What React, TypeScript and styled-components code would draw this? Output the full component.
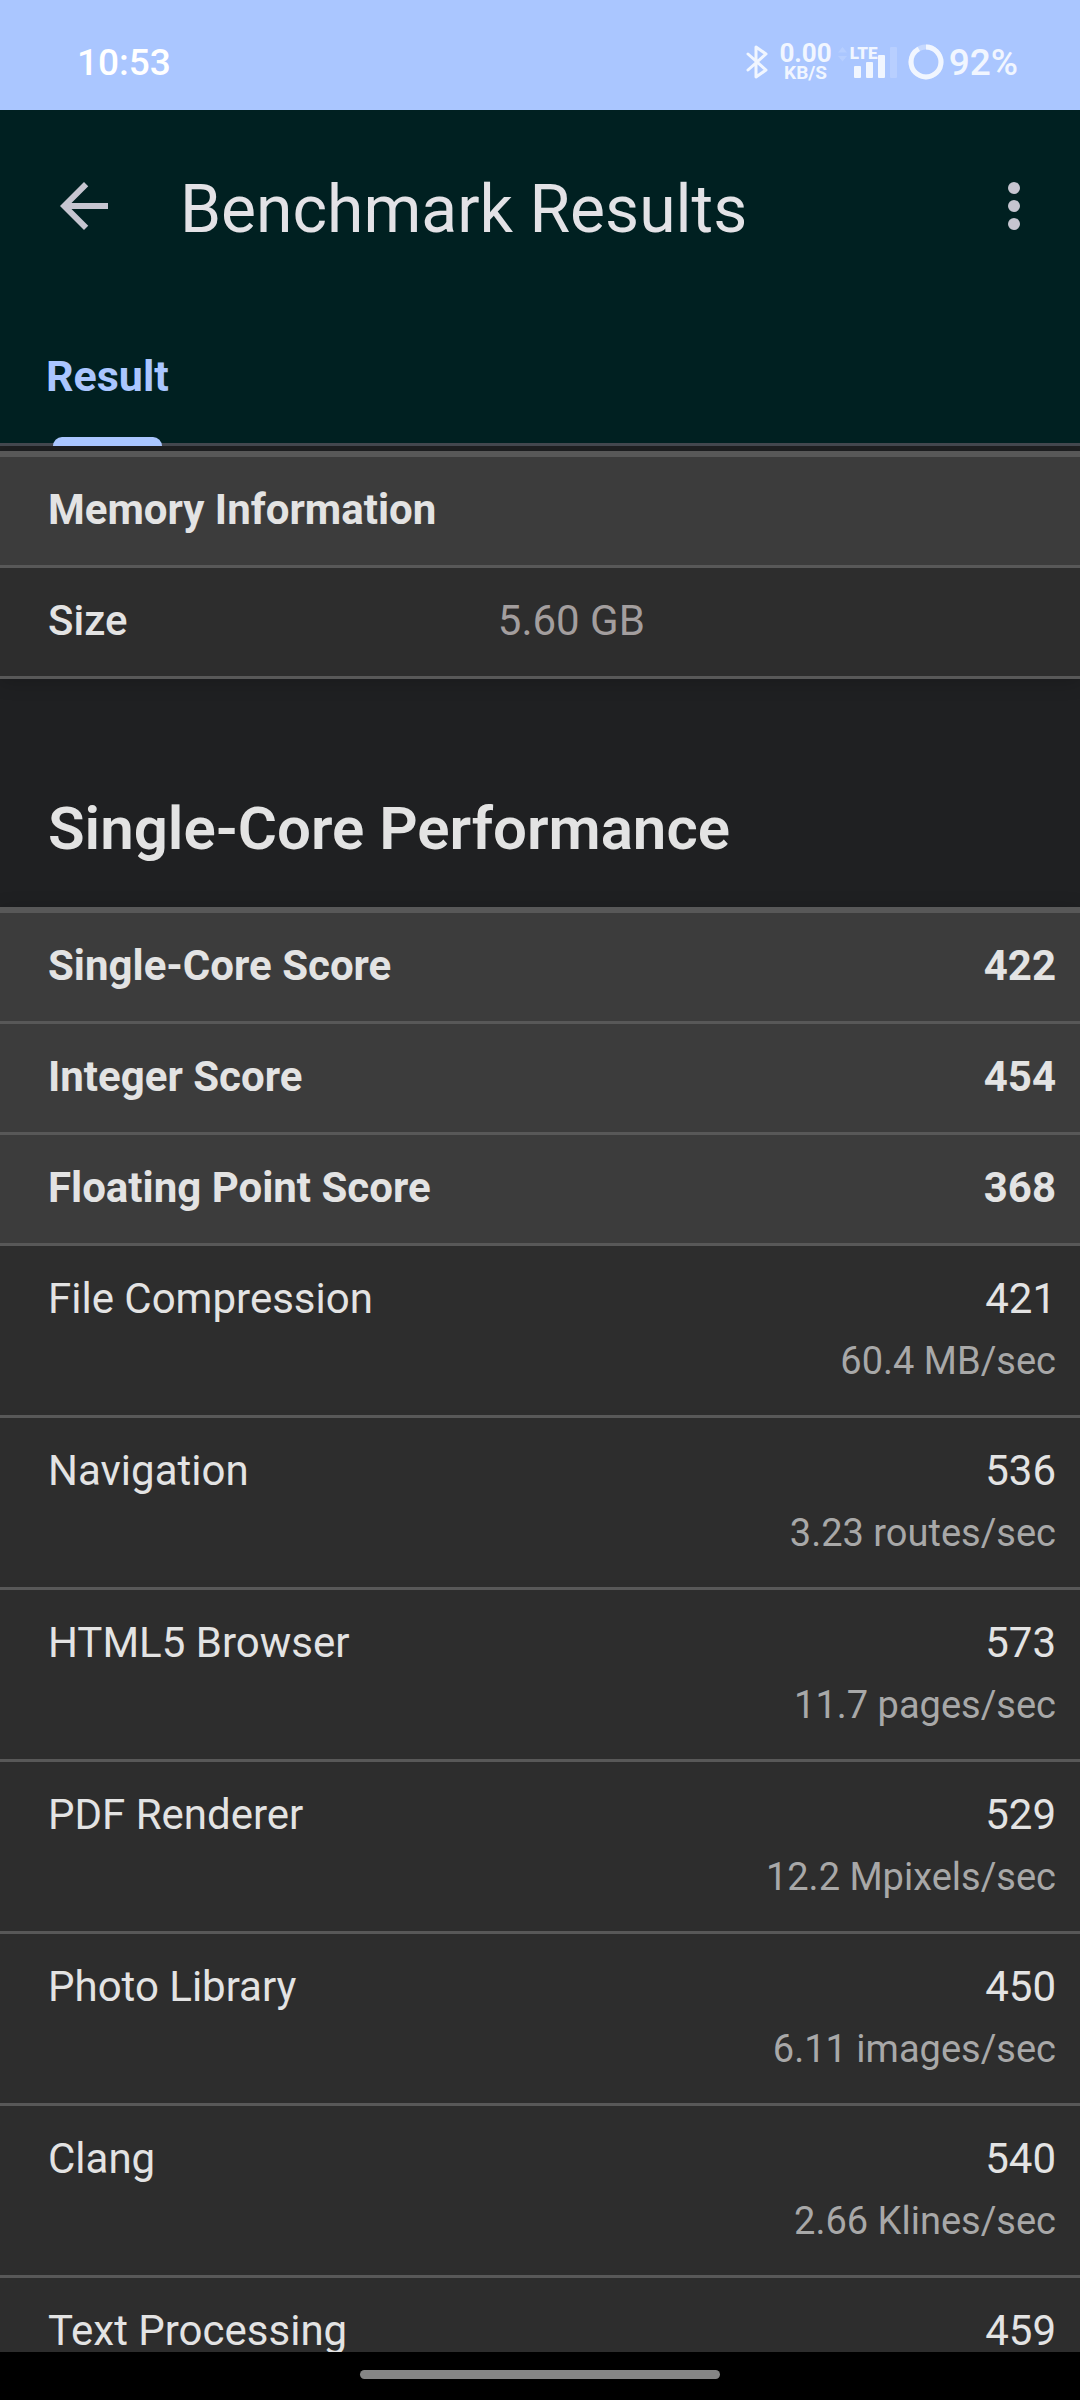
import React from "react";
import styled, { createGlobalStyle } from "styled-components";

const GlobalStyle = createGlobalStyle`
  *, *::before, *::after { box-sizing: border-box; }
  body { margin: 0; background: #1f2022; font-family: Roboto, sans-serif; }
`;

const color = {
  accent: "#aac6ff",
  header: "#002021",
  page: "#1f2022",
  row: "#2d2d2d",
  rowStrong: "#3c3c3c",
  line: "#585858",
  text: "#e3e3e3",
  status: "#f1f6ff",
};

const Screen = styled.div`
  display: flex;
  flex-direction: column;
  height: 100vh;
  overflow: hidden;
  color: ${color.text};
`;

const StatusBar = styled.div`
  flex: none;
  display: flex;
  align-items: center;
  justify-content: space-between;
  height: 110px;
  padding: 14px 62px 0 77px;
  background: ${color.accent};
  color: #ffffff;
`;

const StatusText = styled.span`
  padding-top: 2px;
  font-size: 37px;
  line-height: 44px;
  font-weight: 500;
`;

const StatusIcons = styled.div`
  display: flex;
  align-items: center;
  gap: 5px;
  color: ${color.status};
`;

const NetSpeed = styled.div`
  display: flex;
  flex-direction: column;
  align-items: center;
  margin-left: 6px;
  font-weight: 700;
`;

const SpeedValue = styled.span`
  font-size: 26px;
  line-height: 21px;
`;

const SpeedUnit = styled.span`
  font-size: 19px;
  line-height: 18px;
`;

const Signal = styled.div`
  position: relative;
  display: flex;
  margin-right: 6px;
`;

const NetworkType = styled.span`
  position: absolute;
  top: 0;
  left: 13px;
  font-size: 17px;
  line-height: 12px;
  font-weight: 900;
`;

const Header = styled.header`
  flex: none;
  background: ${color.header};
`;

const Toolbar = styled.div`
  display: flex;
  align-items: center;
  height: 192px;
  padding: 0 30px 0 48px;
`;

const IconButton = styled.button`
  display: flex;
  padding: 0;
  border: 0;
  background: none;
  color: #c6c5d0;
`;

const Title = styled.h1`
  flex: 1;
  margin: 0;
  padding: 8px 0 0 60px;
  font-size: 66px;
  line-height: 78px;
  font-weight: 400;
  color: #e3e2e6;
`;

const Tabs = styled.nav`
  display: flex;
  height: 144px;
  box-shadow: inset 0 -3px #43474e;
`;

const Tab = styled.button`
  position: relative;
  padding: 3px 46px 0;
  border: 0;
  background: none;
  color: ${color.accent};
  font: 700 43px/60px Roboto, sans-serif;

  &::after {
    content: "";
    position: absolute;
    left: 53px;
    right: 53px;
    bottom: 0;
    height: 9px;
    border-radius: 9px 9px 0 0;
    background: ${color.accent};
  }
`;

const Content = styled.main`
  flex: 1;
  min-height: 0;
  overflow: hidden;
  padding-top: 5px;
  background: ${color.page};
`;

const Table = styled.table`
  width: 100%;
  border-collapse: separate;
  border-spacing: 0;
  border-top: 6px solid ${color.line};
  box-shadow: 0 3px 18px rgba(0, 0, 0, 0.2);
  font-size: 42px;
  line-height: 61px;
`;

const Row = styled.tr<{ $strong?: boolean }>`
  background: ${(p) => (p.$strong ? color.rowStrong : color.row)};
  font-weight: ${(p) => (p.$strong ? 700 : 400)};
`;

const Label = styled.th<{ $width?: string; $medium?: boolean }>`
  width: ${(p) => p.$width ?? "auto"};
  padding: 22px 0 25px 48px;
  border-bottom: 3px solid ${color.line};
  font-weight: ${(p) => (p.$medium ? 500 : "inherit")};
  text-align: left;
  vertical-align: top;
`;

const Value = styled.td<{ $muted?: boolean }>`
  padding: ${(p) => (p.$muted ? "22px 24px 22px 1px" : "22px 24px 22px 0")};
  border-bottom: 3px solid ${color.line};
  text-align: ${(p) => (p.$muted ? "left" : "right")};
  vertical-align: top;
  color: ${(p) => (p.$muted ? "#a39e9e" : "inherit")};
`;

const Rate = styled.div`
  font-size: 38px;
  line-height: 64px;
  color: #a8a8a8;
`;

const SectionTitle = styled.h2`
  margin: 0;
  padding: 114px 48px 42px;
  font-size: 60px;
  line-height: 72px;
  font-weight: 600;
`;

const NavBar = styled.div`
  flex: none;
  display: flex;
  justify-content: center;
  height: 48px;
  padding-top: 18px;
  background: #000000;
`;

const HomeHandle = styled.div`
  width: 33.3333%;
  height: 9px;
  border-radius: 5px;
  background: #858585;
`;

const summary = [
  { name: "Single-Core Score", score: 422 },
  { name: "Integer Score", score: 454 },
  { name: "Floating Point Score", score: 368 },
];

const workloads = [
  { name: "File Compression", score: 421, rate: "60.4 MB/sec" },
  { name: "Navigation", score: 536, rate: "3.23 routes/sec" },
  { name: "HTML5 Browser", score: 573, rate: "11.7 pages/sec" },
  { name: "PDF Renderer", score: 529, rate: "12.2 Mpixels/sec" },
  { name: "Photo Library", score: 450, rate: "6.11 images/sec" },
  { name: "Clang", score: 540, rate: "2.66 Klines/sec" },
  { name: "Text Processing", score: 459 },
];

function BluetoothIcon() {
  return (
    <svg width="22" height="34" viewBox="0 0 22 34" fill="none" stroke="currentColor" strokeWidth="3" strokeLinejoin="round" strokeLinecap="round">
      <path d="M2 9 L20 25 L10 32 V2 L20 9 L2 25" />
    </svg>
  );
}

function SignalIcon() {
  return (
    <svg width="60" height="31" viewBox="0 0 60 31" fill="currentColor">
      <path d="M1 5.5 L5.5 0 L10 5.5 Z M1 9 L5.5 14.5 L10 9 Z" opacity="0.18" />
      <rect x="17" y="19" width="7" height="12" rx="1" />
      <rect x="29" y="15" width="7" height="16" rx="1" />
      <rect x="41" y="8" width="7" height="23" rx="1" />
      <rect x="53" y="0" width="7" height="31" rx="1" opacity="0.2" />
    </svg>
  );
}

function BatteryRing() {
  return (
    <svg width="36" height="36" viewBox="0 0 36 36" fill="none" stroke="currentColor" strokeWidth="5">
      <circle cx="18" cy="18" r="15" opacity="0.4" />
      <circle cx="18" cy="18" r="15" pathLength="100" strokeDasharray="92 8" transform="rotate(-90 18 18)" />
    </svg>
  );
}

function BackIcon() {
  return (
    <svg width="72" height="72" viewBox="0 0 24 24" fill="currentColor">
      <path d="M20 11H7.83l5.59-5.59L12 4l-8 8 8 8 1.41-1.41L7.83 13H20v-2z" />
    </svg>
  );
}

function MoreIcon() {
  return (
    <svg width="72" height="72" viewBox="0 0 24 24" fill="currentColor">
      <circle cx="12" cy="6" r="2" />
      <circle cx="12" cy="12" r="2" />
      <circle cx="12" cy="18" r="2" />
    </svg>
  );
}

export default function App() {
  return (
    <Screen>
      <GlobalStyle />
      <StatusBar>
        <StatusText>10:53</StatusText>
        <StatusIcons>
          <BluetoothIcon />
          <NetSpeed>
            <SpeedValue>0.00</SpeedValue>
            <SpeedUnit>KB/S</SpeedUnit>
          </NetSpeed>
          <Signal>
            <SignalIcon />
            <NetworkType>LTE</NetworkType>
          </Signal>
          <BatteryRing />
          <StatusText>92%</StatusText>
        </StatusIcons>
      </StatusBar>

      <Header>
        <Toolbar>
          <IconButton type="button" aria-label="Back">
            <BackIcon />
          </IconButton>
          <Title>Benchmark Results</Title>
          <IconButton type="button" aria-label="More options">
            <MoreIcon />
          </IconButton>
        </Toolbar>
        <Tabs>
          <Tab type="button">Result</Tab>
        </Tabs>
      </Header>

      <Content>
        <Table>
          <tbody>
            <Row $strong>
              <Label colSpan={2}>Memory Information</Label>
            </Row>
            <Row>
              <Label scope="row" $width="46%" $medium>
                Size
              </Label>
              <Value $muted>5.60 GB</Value>
            </Row>
          </tbody>
        </Table>

        <SectionTitle>Single-Core Performance</SectionTitle>

        <Table>
          <tbody>
            {summary.map((item) => (
              <Row key={item.name} $strong>
                <Label scope="row">{item.name}</Label>
                <Value>{item.score}</Value>
              </Row>
            ))}
            {workloads.map((item) => (
              <Row key={item.name}>
                <Label scope="row">{item.name}</Label>
                <Value>
                  {item.score}
                  {item.rate && <Rate>{item.rate}</Rate>}
                </Value>
              </Row>
            ))}
          </tbody>
        </Table>
      </Content>

      <NavBar>
        <HomeHandle />
      </NavBar>
    </Screen>
  );
}
